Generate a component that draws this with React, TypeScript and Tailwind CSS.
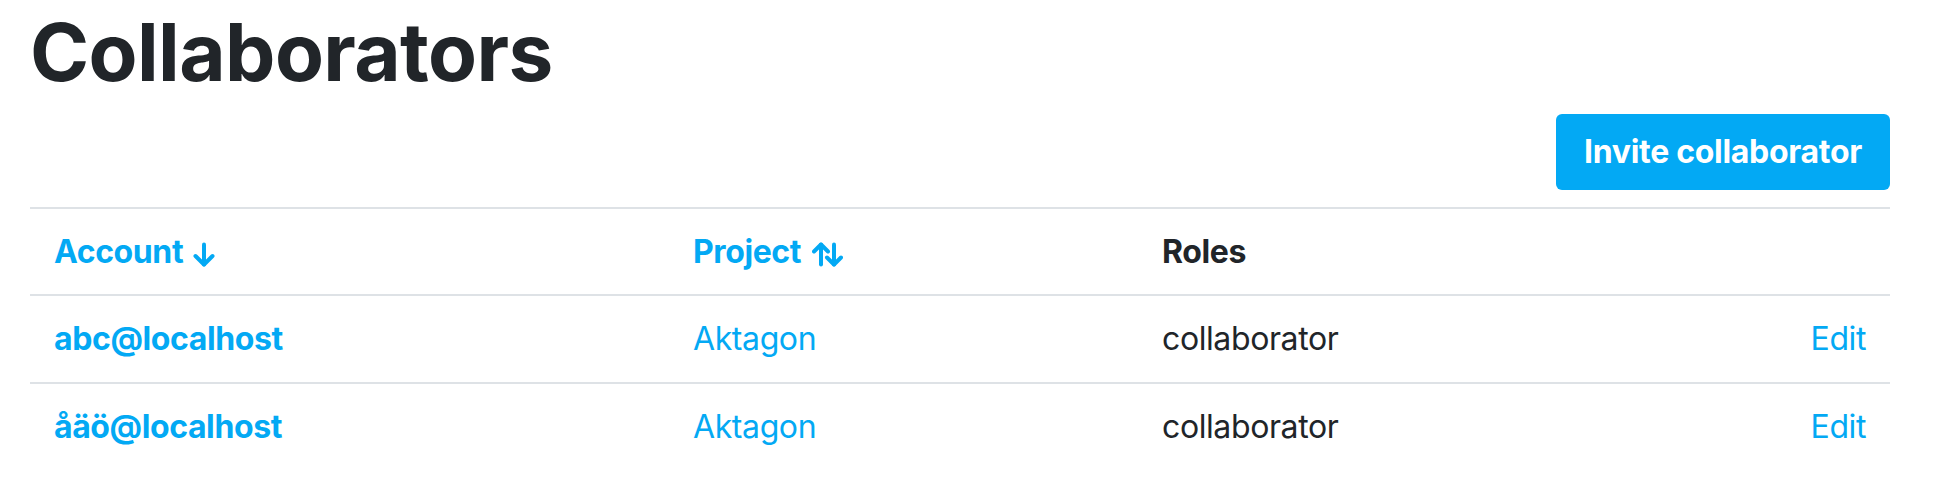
const rows = [
  { id: 1, account: "abc@localhost", project: "Aktagon", roles: "collaborator" },
  { id: 2, account: "åäö@localhost", project: "Aktagon", roles: "collaborator" },
];

function ArrowDown() {
  return (
    <svg width="22" height="25" viewBox="0 0 22 25" fill="none" stroke="currentColor" strokeWidth="4" strokeLinecap="round" strokeLinejoin="round" className="inline-block ml-[10px] mb-[-1px]">
      <path d="M11 2.5v20" />
      <path d="M2.5 14l8.5 8.5 8.5-8.5" />
    </svg>
  );
}

function ArrowUpDown() {
  return (
    <svg width="31" height="25" viewBox="0 0 31 25" fill="none" stroke="currentColor" strokeWidth="4" strokeLinecap="round" strokeLinejoin="round" className="inline-block ml-[11px] mb-[-1px]">
      <path d="M9 22.5v-20" />
      <path d="M2 9.5l7-7 7 7" />
      <path d="M22 2.5v20" />
      <path d="M15 15.5l7 7 7-7" />
    </svg>
  );
}

export default function App() {
  return (
    <div className="bg-white min-h-[500px] text-[#212529] font-['Inter','Liberation_Sans',sans-serif]">
      <div className="w-[1860px] ml-[30px] pt-[4px]">
        <h1 className="text-[80px] leading-[96px] font-bold tracking-[-0.6px]">Collaborators</h1>

        <div className="flex justify-end mt-[14px] mb-[17px]">
          <button className="bg-[#03a9f4] text-white text-[32px] leading-[48px] font-bold tracking-[-0.3px] px-[28px] py-[14px] rounded-[6px]">
            Invite collaborator
          </button>
        </div>

        <table className="w-full text-[32px] leading-[48px] tracking-[-0.4px] border-collapse">
          <thead>
            <tr className="border-t-2 border-[#dee2e6]">
              <th className="text-left font-bold px-[24px] pt-[19px] pb-[18px] w-[639px] text-[#03a9f4]">
                Account<ArrowDown />
              </th>
              <th className="text-left font-bold px-[24px] pt-[19px] pb-[18px] w-[469px] text-[#03a9f4]">
                Project<ArrowUpDown />
              </th>
              <th className="text-left font-bold px-[24px] pt-[19px] pb-[18px]">Roles</th>
              <th className="px-[24px] pt-[19px] pb-[18px]"></th>
            </tr>
          </thead>
          <tbody>
            {rows.map((row) => (
              <tr key={row.id} className="border-t-2 border-[#dee2e6]">
                <td className="px-[24px] py-[19px] font-bold text-[#03a9f4]">{row.account}</td>
                <td className="px-[24px] py-[19px] text-[#03a9f4]">{row.project}</td>
                <td className="px-[24px] py-[19px]">{row.roles}</td>
                <td className="px-[24px] py-[19px] text-right text-[#03a9f4]">Edit</td>
              </tr>
            ))}
          </tbody>
        </table>
      </div>
    </div>
  );
}
